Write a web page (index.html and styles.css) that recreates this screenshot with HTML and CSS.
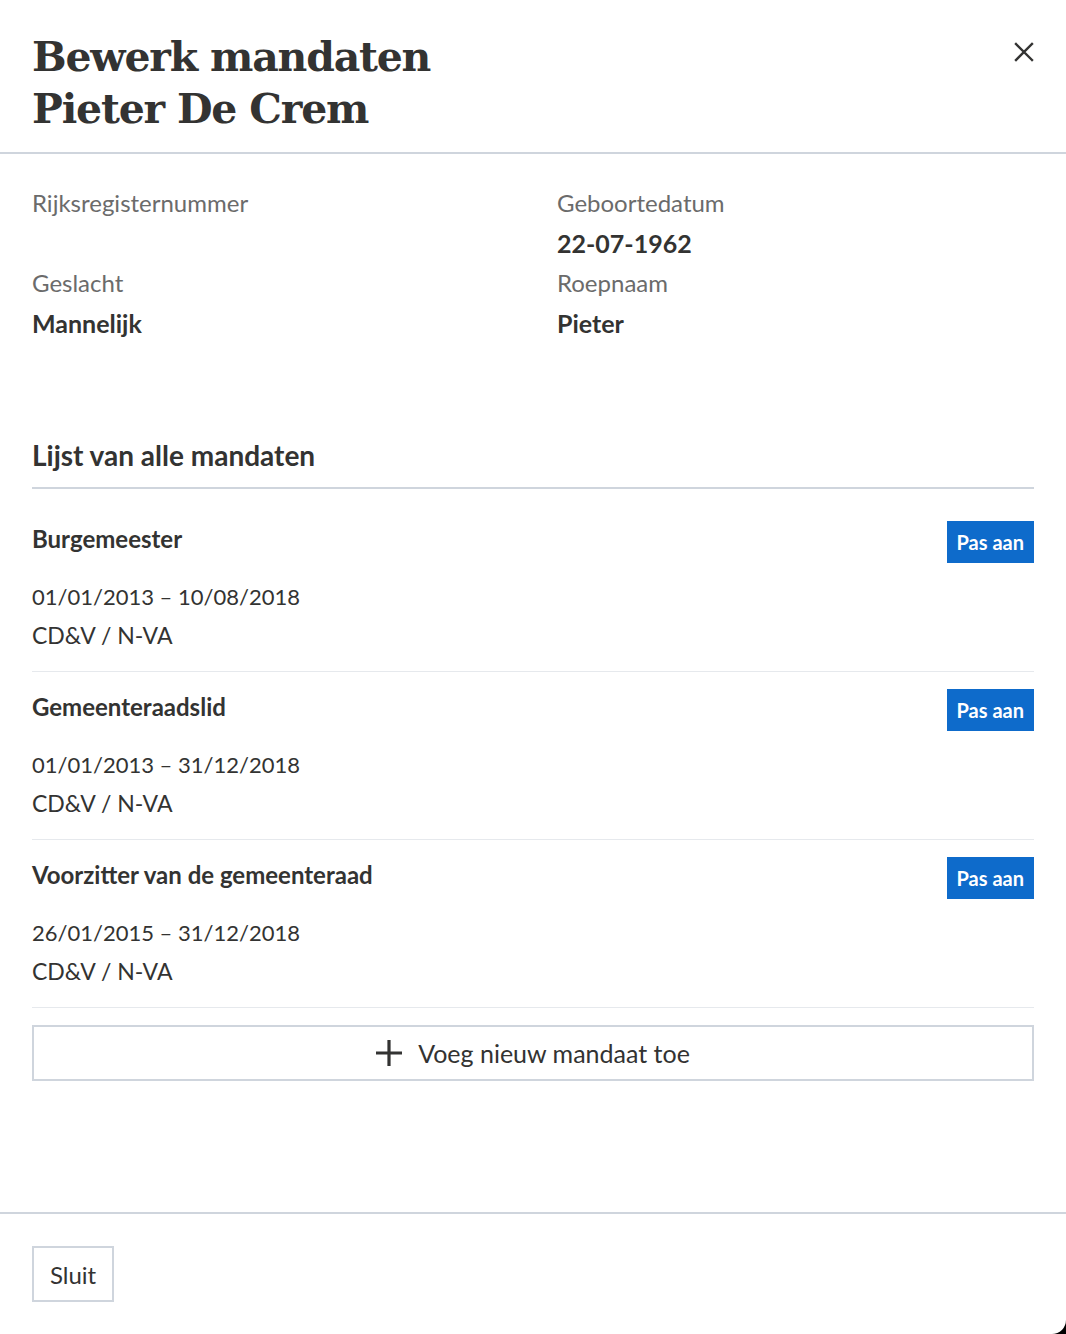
FILE: index.html
```html
<!DOCTYPE html>
<html lang="nl">
<head>
<meta charset="utf-8">
<title>Bewerk mandaten</title>
<link rel="stylesheet" href="styles.css">
</head>
<body>
<div class="modal">
  <header class="modal-header">
    <h1 class="modal-title">Bewerk mandaten<br>Pieter De Crem</h1>
    <button class="close" aria-label="Sluit">
      <svg width="20" height="20" viewBox="0 0 20 20"><path d="M2 2 L18 18 M18 2 L2 18" stroke="#333332" stroke-width="2.4" stroke-linecap="square" fill="none"/></svg>
    </button>
  </header>
  <main class="modal-content">
    <dl class="props">
      <div class="prop"><dt>Rijksregisternummer</dt><dd></dd></div>
      <div class="prop"><dt>Geboortedatum</dt><dd>22-07-1962</dd></div>
      <div class="prop"><dt>Geslacht</dt><dd>Mannelijk</dd></div>
      <div class="prop"><dt>Roepnaam</dt><dd>Pieter</dd></div>
    </dl>
    <h2 class="section-title">Lijst van alle mandaten</h2>
    <ul class="mandates">
      <li class="mandate">
        <div class="mandate-head"><h3>Burgemeester</h3><button class="btn-primary">Pas aan</button></div>
        <p class="period">01/01/2013 – 10/08/2018</p>
        <p class="party">CD&amp;V / N-VA</p>
      </li>
      <li class="mandate">
        <div class="mandate-head"><h3>Gemeenteraadslid</h3><button class="btn-primary">Pas aan</button></div>
        <p class="period">01/01/2013 – 31/12/2018</p>
        <p class="party">CD&amp;V / N-VA</p>
      </li>
      <li class="mandate">
        <div class="mandate-head"><h3>Voorzitter van de gemeenteraad</h3><button class="btn-primary">Pas aan</button></div>
        <p class="period">26/01/2015 – 31/12/2018</p>
        <p class="party">CD&amp;V / N-VA</p>
      </li>
    </ul>
    <button class="btn-add">
      <svg width="26" height="26" viewBox="0 0 26 26"><path d="M13 0 V26 M0 13 H26" stroke="#333332" stroke-width="3.2" fill="none"/></svg>
      <span>Voeg nieuw mandaat toe</span>
    </button>
  </main>
  <footer class="modal-footer">
    <button class="btn-secondary">Sluit</button>
  </footer>
</div>
</body>
</html>
```

FILE: styles.css
```css
* { box-sizing: border-box; }
html, body { margin: 0; padding: 0; }
body {
  background: #000;
  font-family: "Lato", "Open Sans", sans-serif;
  color: #333332;
}
.modal {
  background: #fff;
  min-height: 1334px;
  display: flex;
  flex-direction: column;
  border-bottom-right-radius: 14px;
}
.modal-header {
  display: flex;
  justify-content: space-between;
  align-items: flex-start;
  padding: 31px 32px 17px;
  border-bottom: 2px solid #cfd5dd;
}
.modal-title {
  margin: 0;
  font-family: "DejaVu Serif", serif;
  font-weight: bold;
  font-size: 41px;
  line-height: 52px;
  letter-spacing: -1.2px;
  color: #333332;
}
.close {
  background: none;
  border: 0;
  padding: 0;
  margin: 11px 0 0 0;
  width: 20px;
  height: 20px;
  cursor: pointer;
}
.close svg { display: block; }
.modal-content {
  flex: 1;
  padding: 29px 32px 0;
}
.props {
  margin: 0;
  display: grid;
  grid-template-columns: 1fr 1fr;
  column-gap: 48px;
}
.prop dt {
  font-size: 24px;
  line-height: 40px;
  color: #6b6b6b;
}
.prop dd {
  margin: 0;
  min-height: 40px;
  font-size: 25px;
  line-height: 40px;
  font-weight: bold;
}
.section-title {
  margin: 92px 0 0;
  padding-bottom: 12px;
  border-bottom: 2px solid #cfd5dd;
  font-size: 28px;
  line-height: 40px;
  font-weight: bold;
}
.mandates {
  list-style: none;
  margin: 0;
  padding: 15px 0 0;
}
.mandate {
  padding: 17px 0 16px;
  border-bottom: 1px solid #e6e9ed;
}
.mandate-head {
  display: flex;
  justify-content: space-between;
  align-items: flex-start;
}
.mandate-head h3 {
  margin: 0;
  font-size: 24px;
  line-height: 36px;
  font-weight: bold;
}
.btn-primary {
  background: #0e6bcb;
  color: #fff;
  border: 0;
  height: 42px;
  padding: 0 10px;
  font-family: inherit;
  font-size: 20px;
  font-weight: bold;
  cursor: pointer;
}
.period {
  margin: 14px 0 0;
  font-size: 22px;
  line-height: 39px;
}
.party {
  margin: 0;
  font-size: 23px;
  line-height: 39px;
}
.btn-add {
  margin-top: 17px;
  width: 100%;
  height: 56px;
  background: #fff;
  border: 2px solid #cfd5dd;
  display: flex;
  align-items: center;
  justify-content: center;
  gap: 16px;
  font-family: inherit;
  font-size: 25px;
  color: #333332;
  cursor: pointer;
}
.btn-add svg { display: block; }
.modal-footer {
  border-top: 2px solid #cfd5dd;
  padding: 32px;
}
.btn-secondary {
  height: 56px;
  padding: 0 16px;
  background: #fff;
  border: 2px solid #cfd5dd;
  font-family: inherit;
  font-size: 24px;
  color: #333332;
  cursor: pointer;
}
```
